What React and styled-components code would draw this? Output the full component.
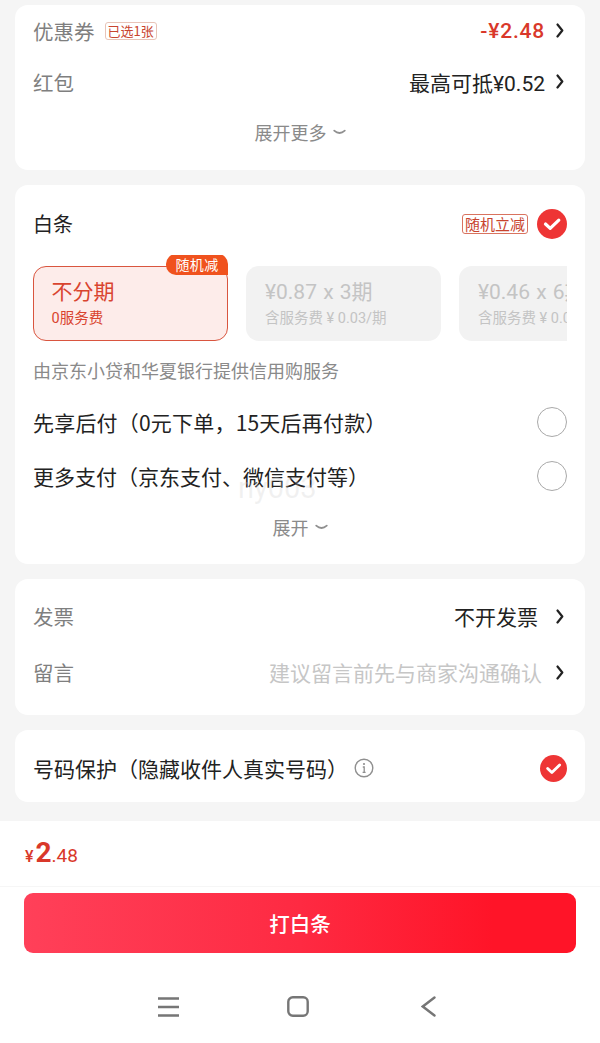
import React from "react";
import styled, { createGlobalStyle } from "styled-components";

const FONT = `"Noto Sans CJK SC", "Noto Sans", sans-serif`;
const NUM = `"Roboto", "Noto Sans CJK SC", sans-serif`;

const Global = createGlobalStyle`
  html, body { margin: 0; padding: 0; background: #f5f5f5; }
  body { font-family: ${FONT}; }
  * { box-sizing: border-box; }
`;

const Page = styled.div`
  width: 600px;
  height: 1043px;
  overflow: hidden;
  display: flex;
  flex-direction: column;
  background: #f5f5f5;
  position: relative;
`;

const Scroll = styled.div`
  flex: 1;
  padding: 5px 15px 0;
  display: flex;
  flex-direction: column;
  gap: 15px;
`;

const Card = styled.section`
  background: #fff;
  border-radius: 13px;
  height: ${(p) => p.$h}px;
  padding: ${(p) => p.$pt || 0}px 18px 0;
  display: flex;
  flex-direction: column;
`;

const Row = styled.div`
  height: ${(p) => p.$h || 52}px;
  margin-top: ${(p) => p.$mt || 0}px;
  display: flex;
  align-items: center;
  justify-content: space-between;
  flex-shrink: 0;
`;

const Left = styled.div`
  display: flex;
  align-items: center;
`;

const Right = styled.div`
  display: flex;
  align-items: center;
`;

const Label = styled.span`
  font-size: 20.5px;
  line-height: 28px;
  color: #7f7f7f;
`;

const Title = styled.span`
  font-size: ${(p) => p.$size || 21}px;
  line-height: 26px;
  letter-spacing: ${(p) => p.$ls || 0}px;
  color: #222;
`;

const Tag = styled.span`
  font-size: ${(p) => p.$size || 13}px;
  height: ${(p) => p.$h || 18}px;
  padding: 0 2px;
  margin-left: ${(p) => p.$ml || 0}px;
  margin-right: ${(p) => p.$mr || 0}px;
  display: inline-flex;
  align-items: center;
  color: #c8442f;
  border: 1px solid ${(p) => p.$border || "#e8c4b8"};
  border-radius: 3px;
  white-space: nowrap;
`;

const Value = styled.span`
  font-family: ${NUM};
  font-size: 21px;
  font-weight: ${(p) => p.$weight || 400};
  letter-spacing: ${(p) => p.$ls || 0}px;
  color: ${(p) => p.$color || "#222"};
  margin-right: ${(p) => p.$mr || 11}px;
  white-space: nowrap;
`;

const ChevronIcon = styled.svg`
  margin-right: 3px;
  flex-shrink: 0;
`;

const Chevron = () => (
  <ChevronIcon width="8" height="15" viewBox="0 0 8 15" fill="none">
    <path d="M1.5 1.5 L6.3 7.5 L1.5 13.5" stroke="#222" strokeWidth="2.2" strokeLinecap="round" strokeLinejoin="round" />
  </ChevronIcon>
);

const More = styled.div`
  display: flex;
  align-items: center;
  justify-content: center;
  gap: 6px;
  font-size: 18px;
  line-height: 24px;
  color: #8a8a8a;
  height: 24px;
  margin-top: ${(p) => p.$mt || 0}px;
`;

const Smile = () => (
  <svg width="13" height="7" viewBox="0 0 13 7" fill="none">
    <path d="M1.2 1.6 Q6.5 6.4 11.8 1.6" stroke="#8f8f8f" strokeWidth="1.7" strokeLinecap="round" />
  </svg>
);

const Check = ({ size = 30 }) => (
  <svg width={size} height={size} viewBox="0 0 30 30">
    <circle cx="15" cy="15" r="15" fill="#ee3535" />
    <path d="M8.5 15 L13.2 19.4 L21.8 11.2" stroke="#fff" strokeWidth="3.2" fill="none" strokeLinecap="round" strokeLinejoin="round" />
  </svg>
);

const Radio = styled.span`
  width: 30px;
  height: 30px;
  border-radius: 50%;
  border: 1.5px solid #a9a9a9;
  flex-shrink: 0;
`;

const Plans = styled.div`
  margin-top: 7px;
  padding-top: 11px;
  height: 92px;
  overflow: hidden;
  flex-shrink: 0;
  display: flex;
  gap: 18px;
`;

const PlanWrap = styled.div`
  position: relative;
  flex: 0 0 195px;
`;

const Plan = styled.div`
  flex: 0 0 195px;
  height: 75px;
  border-radius: 13px;
  padding: ${(p) => (p.$active ? "11px 0 0 17.5px" : "12px 0 0 19px")};
  background: ${(p) => (p.$active ? "#fdecea" : "#f2f2f2")};
  border: ${(p) => (p.$active ? "1.5px solid #d9553f" : "none")};
`;

const PlanTitle = styled.div`
  font-family: ${NUM};
  font-size: 21px;
  line-height: 29px;
  word-spacing: ${(p) => (p.$active ? 0 : 1)}px;
  color: ${(p) => (p.$active ? "#d9442f" : "#c4c4c4")};
  white-space: nowrap;
`;

const PlanSub = styled.div`
  font-family: ${NUM};
  font-size: 14.5px;
  line-height: 20px;
  margin-top: 2px;
  color: ${(p) => (p.$active ? "#d9442f" : "#c4c4c4")};
  white-space: nowrap;
`;

const Ribbon = styled.span`
  position: absolute;
  top: -12px;
  right: 0;
  height: 21px;
  width: 62px;
  background: #f0521e;
  color: #fff;
  font-size: 14px;
  line-height: 20px;
  text-align: center;
  letter-spacing: 0.3px;
  border-radius: 10px 10px 0 10px;
`;

const Hint = styled.div`
  font-size: 18px;
  line-height: 24px;
  color: #8a8a8a;
  margin-top: 11px;
`;

const InfoIcon = styled.svg`
  margin-left: 6px;
`;

const Info = () => (
  <InfoIcon width="20" height="20" viewBox="0 0 20 20" fill="none">
    <circle cx="10" cy="10" r="8.8" stroke="#8f8f8f" strokeWidth="1.4" />
    <circle cx="10" cy="6" r="1.1" fill="#8f8f8f" />
    <path d="M8.8 9 H10.2 V14.4 M8.6 14.4 H11.6" stroke="#8f8f8f" strokeWidth="1.3" />
  </InfoIcon>
);

const Watermark = styled.div`
  position: absolute;
  left: 238px;
  top: 471px;
  font-family: "Roboto", sans-serif;
  font-size: 29px;
  line-height: 34px;
  color: rgba(205, 205, 205, 0.28);
  pointer-events: none;
`;

const Footer = styled.footer`
  height: 222px;
  background: #fff;
  flex-shrink: 0;
  display: flex;
  flex-direction: column;
`;

const PriceRow = styled.div`
  height: 66px;
  padding: 15px 24px 0 25px;
  display: flex;
  align-items: baseline;
  border-bottom: 1px solid #f6f6f6;
  font-family: ${NUM};
  color: #d9382a;
`;

const Price = styled.span`
  font-size: ${(p) => p.$size}px;
  font-weight: ${(p) => p.$weight || 500};
  margin-right: ${(p) => p.$mr || 0}px;
`;

const PayButton = styled.button`
  margin: 6px 24px 0;
  height: 60px;
  border: 0;
  border-radius: 9px;
  background: linear-gradient(90deg, #ff4059 0%, #fe2a42 50%, #ff1428 85%, #ff1428 100%);
  color: #fff;
  font-family: ${FONT};
  font-size: 20.5px;
  font-weight: 500;
  flex-shrink: 0;
`;

const NavBar = styled.nav`
  flex: 1;
  display: flex;
  align-items: center;
  gap: 108px;
  padding: 17px 0 0 158px;
`;

const BackIcon = styled.svg`
  margin-left: 4px;
`;

export default function App() {
  return (
    <Page>
      <Global />
      <Scroll>
        <Card $h={165}>
          <Row $h={51}>
            <Left>
              <Label>优惠券</Label>
              <Tag $ml={10}>已选1张</Tag>
            </Left>
            <Right>
              <Value $color="#d9382a" $weight={500} $ls={0.8}>-¥2.48</Value>
              <Chevron />
            </Right>
          </Row>
          <Row $h={51}>
            <Label>红包</Label>
            <Right>
              <Value>最高可抵¥0.52</Value>
              <Chevron />
            </Right>
          </Row>
          <More $mt={13}>展开更多<Smile /></More>
        </Card>

        <Card $h={379}>
          <Row $h={49} $mt={14}>
            <Title $size={20}>白条</Title>
            <Right>
              <Tag $mr={9} $h={20} $size={15} $border="#d9735f">随机立减</Tag>
              <Check />
            </Right>
          </Row>
          <Plans>
            <PlanWrap>
              <Plan $active>
                <PlanTitle $active>不分期</PlanTitle>
                <PlanSub $active>0服务费</PlanSub>
              </Plan>
              <Ribbon>随机减</Ribbon>
            </PlanWrap>
            <Plan>
              <PlanTitle>¥0.87 x 3期</PlanTitle>
              <PlanSub>含服务费 ¥ 0.03/期</PlanSub>
            </Plan>
            <Plan>
              <PlanTitle>¥0.46 x 6期</PlanTitle>
              <PlanSub>含服务费 ¥ 0.02/期</PlanSub>
            </Plan>
          </Plans>
          <Hint>由京东小贷和华夏银行提供信用购服务</Hint>
          <Row $h={54} $mt={13}>
            <Title $ls={0.2}>先享后付（0元下单，15天后再付款）</Title>
            <Radio />
          </Row>
          <Row $h={54}>
            <Title>更多支付（京东支付、微信支付等）</Title>
            <Radio />
          </Row>
          <More $mt={12}>展开<Smile /></More>
        </Card>

        <Card $h={136} $pt={9}>
          <Row $h={56}>
            <Label>发票</Label>
            <Right>
              <Value $mr={18}>不开发票</Value>
              <Chevron />
            </Right>
          </Row>
          <Row $h={56}>
            <Label>留言</Label>
            <Right>
              <Value $color="#c6c6c6" $mr={14}>建议留言前先与商家沟通确认</Value>
              <Chevron />
            </Right>
          </Row>
        </Card>

        <Card $h={72} $pt={6}>
          <Row $h={64}>
            <Left>
              <Title>号码保护（隐藏收件人真实号码）</Title>
              <Info />
            </Left>
            <Check size={27} />
          </Row>
        </Card>
      </Scroll>

      <Watermark>ny003</Watermark>

      <Footer>
        <PriceRow>
          <Price $size={16} $mr={2}>¥</Price>
          <Price $size={28} $weight={700}>2</Price>
          <Price $size={19} $weight={400}>.48</Price>
        </PriceRow>
        <PayButton>打白条</PayButton>
        <NavBar>
          <svg width="21" height="20" viewBox="0 0 21 20" fill="none">
            <path d="M0 1.5 H21 M0 10 H21 M0 18.5 H21" stroke="#767676" strokeWidth="2.6" />
          </svg>
          <svg width="22" height="21" viewBox="0 0 22 21" fill="none">
            <rect x="1.3" y="1.3" width="19.4" height="18.4" rx="4.5" stroke="#767676" strokeWidth="2.4" />
          </svg>
          <BackIcon width="15" height="21" viewBox="0 0 15 21" fill="none">
            <path d="M13.5 1.5 L1.8 10.5 L13.5 19.5" stroke="#767676" strokeWidth="2.4" strokeLinecap="round" />
          </BackIcon>
        </NavBar>
      </Footer>
    </Page>
  );
}
